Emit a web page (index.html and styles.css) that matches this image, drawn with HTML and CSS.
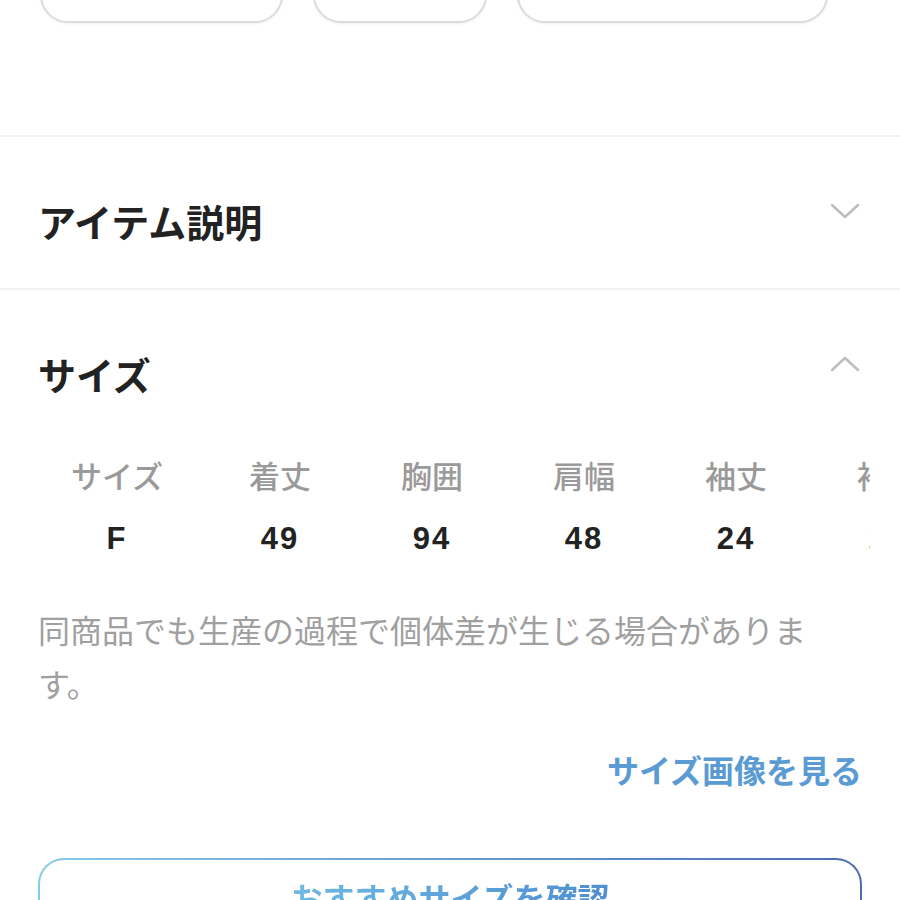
FILE: index.html
```html
<!DOCTYPE html>
<html lang="ja">
<head>
    <meta charset="UTF-8">
    <meta name="viewport" content="width=device-width, initial-scale=1.0">
    <title>アイテム詳細</title>
    <link rel="stylesheet" href="styles.css">
</head>
<body>
    <div class="options">
        <button class="option wide"></button>
        <button class="option small"></button>
        <button class="option large"></button>
    </div>

    <section class="accordion">
        <div class="accordion-head">
            <h2>アイテム説明</h2>
            <svg class="chevron" width="30" height="16" viewBox="0 0 30 16">
                <polyline points="2,2 15,14 28,2" />
            </svg>
        </div>
    </section>

    <section class="accordion">
        <div class="accordion-head">
            <h2>サイズ</h2>
            <svg class="chevron" width="30" height="16" viewBox="0 0 30 16">
                <polyline points="2,14 15,2 28,14" />
            </svg>
        </div>

        <div class="table-scroll">
            <div class="size-table">
                <div class="th">サイズ</div>
                <div class="th">着丈</div>
                <div class="th">胸囲</div>
                <div class="th">肩幅</div>
                <div class="th">袖丈</div>
                <div class="th">袖口</div>
                <div class="td">F</div>
                <div class="td">49</div>
                <div class="td">94</div>
                <div class="td">48</div>
                <div class="td">24</div>
                <div class="td">20</div>
            </div>
        </div>

        <p class="note">同商品でも生産の過程で個体差が生じる場合があります。</p>

        <div class="link-row">
            <a href="#" class="size-link">サイズ画像を見る</a>
        </div>

        <button class="recommend"><span>おすすめサイズを確認</span></button>
    </section>
</body>
</html>
```

FILE: styles.css
```css
body {
    margin: 0;
    font-family: "Noto Sans CJK JP", "Noto Sans", sans-serif;
    background-color: #fff;
    color: #222;
}

/* option buttons cut off at the top of the view */
.options {
    display: flex;
    gap: 30px;
    margin: -62px 0 112px 40px;
}

.option {
    height: 85px;
    background-color: #fff;
    border: 2px solid #dcdcdc;
    border-radius: 28px;
    box-shadow: 0 1px 3px rgba(0, 0, 0, 0.06);
    padding: 0;
}

.option.wide { width: 243px; }
.option.small { width: 174px; }
.option.large { width: 311px; }

.accordion {
    border-top: 2px solid #f2f2f2;
    padding: 58px 38px 42px;
}

.accordion-head {
    display: flex;
    justify-content: space-between;
    align-items: flex-start;
}

.accordion-head h2 {
    margin: 0;
    font-size: 38px;
    line-height: 51px;
    font-weight: 700;
    color: #222;
}

.chevron {
    margin: 8px 2px 0 0;
}

.chevron polyline {
    fill: none;
    stroke: #bdbdbd;
    stroke-width: 2.5;
    stroke-linecap: round;
    stroke-linejoin: round;
}

.table-scroll {
    margin: 45px -8px 0;
    overflow: hidden;
}

.size-table {
    display: grid;
    grid-template-columns: 174px repeat(5, 152px);
    width: max-content;
    text-align: center;
    line-height: 61px;
}

.th {
    font-size: 31px;
    font-weight: 500;
    color: #9a9a9a;
}

.td {
    font-family: "Liberation Sans", "Noto Sans CJK JP", sans-serif;
    font-size: 31px;
    font-weight: 700;
    color: #222;
    letter-spacing: 2px;
    padding-top: 3px;
}

.note {
    margin: 33px 0 0;
    font-size: 32px;
    line-height: 54px;
    color: #a0a0a0;
}

.link-row {
    margin-top: 35px;
    text-align: right;
    line-height: 48px;
}

.size-link {
    font-size: 32px;
    font-weight: 700;
    color: #5b9bd4;
    text-decoration: none;
}

.recommend {
    display: block;
    width: 100%;
    margin-top: 58px;
    padding: 15px 0 49px;
    border: 2px solid transparent;
    border-radius: 26px;
    background:
        linear-gradient(#fff, #fff) padding-box,
        linear-gradient(90deg, #86cbe8, #4b6db2) border-box;
    font-family: inherit;
    text-align: center;
}

.recommend span {
    display: inline-block;
    font-size: 32px;
    line-height: 44px;
    font-weight: 700;
    background: linear-gradient(90deg, #6fb9e3, #4f8fd0);
    -webkit-background-clip: text;
    background-clip: text;
    color: transparent;
}
```
